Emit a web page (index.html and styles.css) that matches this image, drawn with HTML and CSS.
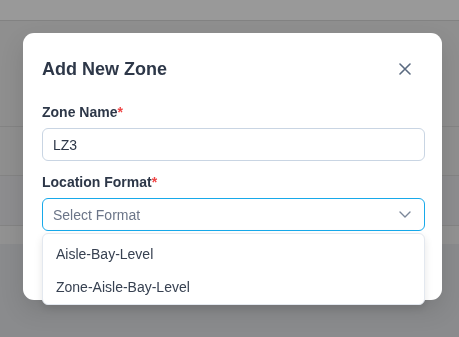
FILE: index.html
```html
<!DOCTYPE html>
<html>
<head>
<meta charset="utf-8">
<link rel="stylesheet" href="styles.css">
</head>
<body>
<div class="page">
  <div class="topbar"></div>
  <div class="row row-tall"></div>
  <div class="row row-mid"></div>
  <div class="row row-mid"></div>
  <div class="band"></div>
</div>
<div class="overlay"></div>
<div class="modal">
  <div class="modal-head">
    <h2 class="title">Add New Zone</h2>
    <button class="close" aria-label="Close">
      <svg width="12" height="12" viewBox="0 0 12 12"><path d="M1 1L11 11M11 1L1 11" stroke="#5a6a80" stroke-width="1.6" stroke-linecap="round" fill="none"/></svg>
    </button>
  </div>
  <div class="modal-body">
    <div class="field">
      <label class="label">Zone Name<span class="req">*</span></label>
      <div class="input">LZ3</div>
    </div>
    <div class="field">
      <label class="label">Location Format<span class="req">*</span></label>
      <div class="select">
        <span class="placeholder">Select Format</span>
        <svg class="chev" width="12" height="7" viewBox="0 0 12 7"><path d="M1 1L6 6L11 1" stroke="#7b8799" stroke-width="1.4" fill="none" stroke-linecap="round" stroke-linejoin="round"/></svg>
      </div>
    </div>
  </div>
  <div class="menu">
    <div class="item">Aisle-Bay-Level</div>
    <div class="item">Zone-Aisle-Bay-Level</div>
  </div>
</div>
</body>
</html>
```
FILE: styles.css
```css
html, body {
  margin: 0;
  padding: 0;
  height: 100%;
  overflow: hidden;
  font-family: "Liberation Sans", Arial, sans-serif;
}
.page {
  background: #e7e8eb;
  height: 100%;
}
.topbar {
  height: 20px;
  background: #ffffff;
  border-bottom: 1px solid #d9d9d9;
}
.row {
  background: #eeeeee;
  border-bottom: 1px solid #dcdcdc;
}
.row-tall { height: 105px; }
.row-mid { height: 48px; }
.row-mid + .row-mid { height: 49px; background: #ebecee; }
.band {
  height: 18px;
  background: #f4f4f4;
}
.overlay {
  position: fixed;
  inset: 0;
  background: rgba(0, 0, 0, 0.4);
}
.modal {
  position: absolute;
  left: 23px;
  top: 33px;
  width: 419px;
  box-sizing: border-box;
  background: #fff;
  border-radius: 11px;
  padding: 24px 17px 69px 19px;
  box-shadow: 0 10px 25px rgba(0,0,0,0.12);
}
.modal-head {
  display: flex;
  align-items: center;
  justify-content: space-between;
  height: 24px;
}
.title {
  margin: 0;
  font-size: 18px;
  line-height: 24px;
  font-weight: 700;
  color: #2d3748;
}
.close {
  width: 24px;
  height: 24px;
  margin-right: 8px;
  padding: 0;
  border: 0;
  background: transparent;
  display: flex;
  align-items: center;
  justify-content: center;
}
.modal-body {
  padding-top: 21px;
  display: flex;
  flex-direction: column;
  gap: 11px;
}
.field {
  display: flex;
  flex-direction: column;
}
.label {
  font-size: 14px;
  line-height: 20px;
  font-weight: 700;
  color: #2d3748;
  margin-bottom: 6px;
}
.req {
  color: #ef4444;
}
.input, .select {
  height: 33px;
  box-sizing: border-box;
  border-radius: 6px;
  padding: 0 13px 0 10px;
  font-size: 14px;
  display: flex;
  align-items: center;
}
.input {
  border: 1px solid #c9d5e3;
  color: #2d3748;
}
.select {
  border: 1px solid #17a9ea;
  justify-content: space-between;
}
.placeholder {
  color: #6b7588;
}
.menu {
  position: absolute;
  left: 19px;
  right: 17px;
  top: 200px;
  background: #fff;
  border: 1px solid #e3e8ef;
  border-radius: 6px;
  padding: 3px 0 1px;
  box-shadow: 0 4px 8px rgba(0,0,0,0.10);
}
.item {
  height: 33px;
  display: flex;
  align-items: center;
  padding-left: 13px;
  font-size: 14px;
  color: #374151;
}
```
